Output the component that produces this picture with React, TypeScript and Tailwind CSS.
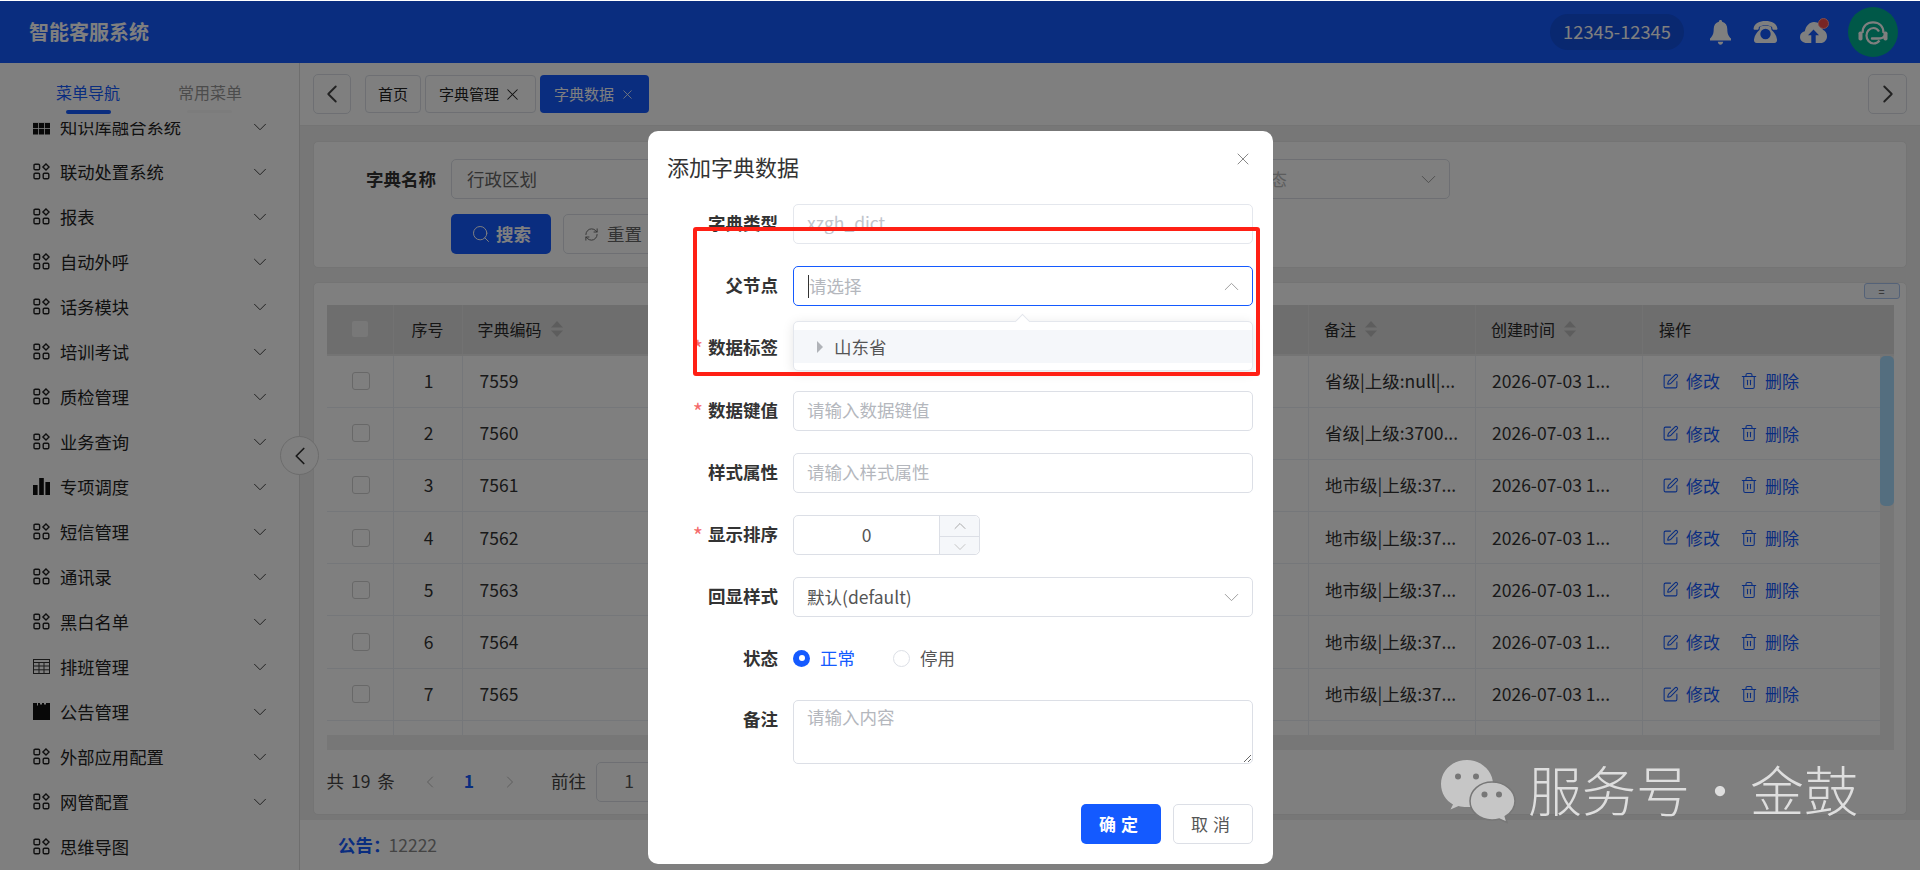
import React from "react";
import { ChevronDown, ChevronLeft, ChevronRight, ChevronUp, X, Search, RefreshCw, SquarePen, Trash2 } from "lucide-react";

const FONT = "font-['Noto_Sans_CJK_SC','Noto_Sans',sans-serif]";

function AppsIcon() {
  return (
    <svg viewBox="0 0 17 17" className="w-[17px] h-[17px] shrink-0" fill="none" stroke="#222" strokeWidth="1.4">
      <rect x="1" y="1.2" width="5.6" height="5.6" rx="1.2" />
      <rect x="1" y="10.2" width="5.6" height="5.6" rx="1.2" />
      <rect x="10.2" y="10.2" width="5.6" height="5.6" rx="1.2" />
      <path d="M13 .9l3.1 3.1L13 7.1 9.9 4z" />
    </svg>
  );
}
function GridIcon() {
  return (
    <svg viewBox="0 0 17 17" className="w-[17px] h-[17px] shrink-0" fill="#111">
      <rect x="0" y="0.5" width="17" height="3.6" />
      <rect x="0" y="5" width="5.2" height="5.2" />
      <rect x="6" y="5" width="5.2" height="5.2" />
      <rect x="12" y="5" width="5" height="5.2" />
      <rect x="0" y="11" width="5.2" height="5.5" />
      <rect x="6" y="11" width="5.2" height="5.5" />
      <rect x="12" y="11" width="5" height="5.5" />
    </svg>
  );
}
function BarsIcon() {
  return (
    <svg viewBox="0 0 17 17" className="w-[17px] h-[17px] shrink-0" fill="#111">
      <rect x="0" y="7" width="4.6" height="10" />
      <rect x="6.2" y="0" width="4.6" height="17" />
      <rect x="12.4" y="4" width="4.6" height="13" />
    </svg>
  );
}
function TableIcon() {
  return (
    <svg viewBox="0 0 17 17" className="w-[17px] h-[17px] shrink-0" fill="none" stroke="#333" strokeWidth="1">
      <rect x="0.5" y="1.5" width="16" height="14" />
      <path d="M0.5 4.5h16M0.5 8h16M0.5 11.8h16M6 4.5v11M11 4.5v11" />
    </svg>
  );
}
function NoticeIcon() {
  return (
    <svg viewBox="0 0 17 17" className="w-[17px] h-[17px] shrink-0" fill="#111">
      <path d="M0 0h4v2.4h1V0h2v1.4h2V0h2v1.4h2V0h4v17H0z" />
    </svg>
  );
}

const menu: [string, React.ReactNode, boolean][] = [
  ["知识库融合系统", <GridIcon />, true],
  ["联动处置系统", <AppsIcon />, true],
  ["报表", <AppsIcon />, true],
  ["自动外呼", <AppsIcon />, true],
  ["话务模块", <AppsIcon />, true],
  ["培训考试", <AppsIcon />, true],
  ["质检管理", <AppsIcon />, true],
  ["业务查询", <AppsIcon />, true],
  ["专项调度", <BarsIcon />, true],
  ["短信管理", <AppsIcon />, true],
  ["通讯录", <AppsIcon />, true],
  ["黑白名单", <AppsIcon />, true],
  ["排班管理", <TableIcon />, true],
  ["公告管理", <NoticeIcon />, true],
  ["外部应用配置", <AppsIcon />, true],
  ["网管配置", <AppsIcon />, true],
  ["思维导图", <AppsIcon />, false],
];

const rows = [
  ["1", "7559", "省级|上级:null|..."],
  ["2", "7560", "省级|上级:3700..."],
  ["3", "7561", "地市级|上级:37..."],
  ["4", "7562", "地市级|上级:37..."],
  ["5", "7563", "地市级|上级:37..."],
  ["6", "7564", "地市级|上级:37..."],
  ["7", "7565", "地市级|上级:37..."],
  ["", "", ""],
];

function SortIcon() {
  return (
    <svg viewBox="0 0 12 16" className="w-[12px] h-[16px] ml-[9px] shrink-0" fill="#bbbbbb">
      <path d="M6 0l6 6.5H0zM6 16L0 9.500h12z" />
    </svg>
  );
}

function Header() {
  return (
    <header className="h-[62px] shrink-0 bg-[#145aff] flex items-center pl-[29px] pr-[22px] text-white">
      <div className="text-[20px] font-bold">智能客服系统</div>
      <div className="ml-auto flex items-center">
        <div className="w-[134px] h-[36px] rounded-full bg-[#1250e0] flex items-center justify-center text-[18.300px]">12345-12345</div>
        <svg viewBox="0 0 21 25" className="w-[21px] h-[25px] ml-[26px]" fill="#fff">
          <path d="M10.500 0c1 0 1.600.7 1.600 1.700 3.400.8 5.200 3.600 5.200 7.300 0 5 1.300 7.300 3.700 9.600v1.900H0v-1.900C2.400 16.300 3.700 14 3.700 9c0-3.700 1.800-6.500 5.200-7.300C8.900.7 9.500 0 10.500 0z" />
          <path d="M7.800 21.800h5.400c-.3 1.700-1.400 3-2.700 3s-2.400-1.300-2.700-3z" />
        </svg>
        <svg viewBox="0 0 25 22" className="w-[25px] h-[22px] ml-[22px]" fill="#fff">
          <path d="M0.600 7.200C1.500 2.400 6.500 0 12.500 0s11 2.400 11.900 7.200c.2 1-.4 1.500-1.300 1.500h-2.300c-.9 0-1.400-.5-1.500-1.300l-.2-1.500C17.300 4.700 15 4.200 12.500 4.200s-4.800.5-6.600 1.700l-.2 1.500c-.1.800-.6 1.300-1.500 1.300H1.900C1 8.700.4 8.200.6 7.200z" />
          <path
            fillRule="evenodd"
            d="M7 5.800c1.500-.7 3.500-1 5.500-1s4 .3 5.500 1l.5 3.200c2.500 2 5 5.500 5.500 9.500.2 2-.8 3.500-2.800 3.500H3.800C1.800 22 .8 20.500 1 18.500 1.500 14.500 4 11 6.500 9zM12.500 7.800a5.200 5.200 0 100 10.400 5.200 5.200 0 000-10.400z"
          />
        </svg>
        <div className="relative w-[27px] h-[21px] ml-[22px]">
          <svg viewBox="0 0 27 21" className="w-[27px] h-[21px]">
            <path d="M7 21C3 21 0 18.500 0 15c0-3 2-5.200 4.800-5.700C5.800 4 9.500 0 14 0c4.600 0 8 3.300 8.800 7.800C25.300 8.700 27 11.200 27 14.200 27 18 24.300 21 20.500 21z" fill="#fff" />
            <path d="M13.500 7.500l5.500 5.800h-3.300V21h-4.400v-7.700H8z" fill="#145aff" />
          </svg>
          <span className="absolute -top-[4px] -right-[2px] w-[11px] h-[11px] rounded-full bg-[#f04b4b] border border-[#ff9a9a]" />
        </div>
        <div className="w-[50px] h-[50px] rounded-full bg-[#00b090] ml-[21px] flex items-center justify-center">
          <svg viewBox="0 0 30 24" className="w-[30px] h-[24px] mt-[1px]" fill="none" stroke="#fff">
            <path d="M4.500 12C4.500 5 9 1.300 15 1.300S25.500 5 25.500 12" strokeWidth="2.200" />
            <rect x="0.500" y="10.500" width="4" height="9" rx="1.800" fill="#fff" stroke="none" />
            <rect x="25.500" y="10.500" width="4" height="9" rx="1.800" fill="#fff" stroke="none" />
            <path d="M21 10.500C19.500 8 17.500 7 15.500 7 11.500 7 8.500 10.500 8.500 14.500s3 8 7 8c2.500 0 4.500-1 6-3" strokeWidth="2.200" />
            <path d="M14 17.500h6c3 0 5.500-.5 6.500-2.500" strokeWidth="2.400" strokeLinecap="round" />
          </svg>
        </div>
      </div>
    </header>
  );
}

function Sidebar() {
  return (
    <aside className="w-[300px] shrink-0 border-r border-[#dcdcdc] bg-white flex flex-col relative">
      <div className="h-[59px] shrink-0 flex text-[16px] relative z-10 bg-white">
        <div className="absolute left-[66px] top-[47px] w-[45px] h-[3.500px] rounded-full bg-[#145aff]" />
        <div className="absolute left-[187px] top-[47px] w-[45px] h-[3px] rounded-full bg-[#f8f8f8]" />
        <div className="w-[178px] pl-[56px] pt-[17px] text-[#145aff]">菜单导航</div>
        <div className="pt-[17px] text-[#999]">常用菜单</div>
      </div>
      <div className="flex-1 overflow-hidden">
        <div className="-mt-[18px]">
          {menu.map(([name, icon, arrow]) => (
            <div key={name} className="h-[45px] flex items-center pl-[33px] pr-[28px]">
              {icon}
              <span className="ml-[10px] text-[17.300px] text-[#222] leading-none">{name}</span>
              {arrow && <ChevronDown className="ml-auto w-[22px] h-[22px] text-[#333]" strokeWidth={1} />}
            </div>
          ))}
        </div>
      </div>
      <div className="absolute left-[280px] top-[373px] w-[39px] h-[39px] rounded-full bg-white border border-[#d8d8d8] z-10 flex items-center justify-center">
        <ChevronLeft className="w-[30px] h-[30px] text-[#333]" strokeWidth={1.400} />
      </div>
    </aside>
  );
}

function Tabs() {
  return (
    <div className="h-[63px] shrink-0 bg-white border-b border-[#e8e8e8] flex items-center px-[13px]">
      <div className="w-[38px] h-[40px] rounded-[5px] border border-[#dcdfe6] flex items-center justify-center">
        <ChevronLeft className="w-[30px] h-[30px] text-[#444]" strokeWidth={1.500} />
      </div>
      <div className="ml-[14px] h-[38px] w-[56px] rounded-[4px] border border-[#dcdfe6] flex items-center justify-center text-[15px] text-[#222]">首页</div>
      <div className="ml-[4px] h-[38px] w-[111px] rounded-[4px] border border-[#dcdfe6] flex items-center pl-[13px] text-[15px] text-[#222]">
        字典管理
        <X className="w-[19px] h-[19px] ml-[4px] text-[#222]" strokeWidth={1.300} />
      </div>
      <div className="ml-[4px] h-[38px] w-[109px] rounded-[4px] bg-[#145aff] flex items-center pl-[14px] text-[15px] text-white">
        字典数据
        <X className="w-[15px] h-[15px] ml-[6px] text-white" strokeWidth={1.300} />
      </div>
      <div className="ml-auto w-[39px] h-[40px] rounded-[5px] border border-[#dcdfe6] flex items-center justify-center">
        <ChevronRight className="w-[30px] h-[30px] text-[#444]" strokeWidth={1.500} />
      </div>
    </div>
  );
}

function SearchItem({ label, value, placeholder, select }: { label?: string; value?: string; placeholder?: string; select?: boolean }) {
  return (
    <div className="flex items-center">
      <div className="w-[105px] text-right text-[17.500px] font-bold text-[#333] mr-[15px]">{label}</div>
      <div className="w-[249px] h-[40px] rounded-[5px] border border-[#dcdfe6] flex items-center pl-[15px] pr-[8px] text-[17.500px]">
        <span className={value ? "text-[#666]" : "text-[#bbb]"}>{value ?? placeholder}</span>
        {select && <ChevronDown className="ml-auto w-[25px] h-[25px] text-[#999]" strokeWidth={0.900} />}
      </div>
    </div>
  );
}

function SearchCard() {
  return (
    <section className="h-[127px] shrink-0 bg-white rounded-[5px] border border-[#e8e8e8] pt-[17px] pl-[17px]">
      <div className="flex gap-[6px]">
        <SearchItem label="字典名称" value="行政区划" />
        <SearchItem />
        <SearchItem placeholder="数据状态" select />
      </div>
      <div className="flex ml-[120px] mt-[15px] gap-[12px] text-[17.500px]">
        <div className="w-[100px] h-[40px] rounded-[5px] bg-[#145aff] text-white font-bold flex items-center justify-center gap-[5px]">
          <Search className="w-[20px] h-[20px]" strokeWidth={1.200} />
          搜索
        </div>
        <div className="w-[100px] h-[40px] rounded-[5px] border border-[#dcdfe6] text-[#666] flex items-center justify-center gap-[8px]">
          <RefreshCw className="w-[15px] h-[15px]" strokeWidth={1.500} />
          重置
        </div>
      </div>
    </section>
  );
}

function DataTable() {
  return (
    <section className="h-[533px] shrink-0 mt-[14px] bg-white rounded-[5px] border border-[#e8e8e8] px-[12.500px] relative">
      <div className="h-[22px] flex justify-end -mr-[6px]">
        <div className="w-[36px] h-[16px] rounded-[3px] border border-[#a8c4f0] bg-[#f0f6ff] flex items-center justify-center text-[#555] text-[11px] leading-none">=</div>
      </div>
      <div className="h-[50.500px] bg-[#dcdcdc] flex items-stretch text-[16px] text-[#2a2a2a] border-b-2 border-[#e8e8e8]">
        <div className="w-[67px] border-r border-[#e4e4e4] flex items-center pl-[25px]">
          <span className="w-[16px] h-[16px] rounded-[2px] bg-[#f0f0f0]" />
        </div>
        <div className="w-[69px] border-r border-[#e4e4e4] flex items-center justify-center">序号</div>
        <div className="flex-1 border-r border-[#e4e4e4] flex items-center pl-[15px]">字典编码<SortIcon /></div>
        <div className="w-[167px] border-r border-[#e4e4e4] flex items-center pl-[15px]">备注<SortIcon /></div>
        <div className="w-[167px] border-r border-[#e4e4e4] flex items-center pl-[15px]">创建时间<SortIcon /></div>
        <div className="w-[250.500px] flex items-center pl-[16px]">操作</div>
      </div>
      <div className="flex h-[394px]">
        <div className="flex-1 flex flex-col min-w-0">
          <div className="h-[379.500px] overflow-hidden">
            {rows.map((r, i) => (
              <div key={i} className="h-[52.200px] flex items-stretch border-b border-[#ebeef5] text-[17.500px] text-[#333]">
                <div className="w-[67px] border-r border-[#ebeef5] flex items-center pl-[25px]">
                  {r[0] && <span className="w-[18px] h-[18px] rounded-[3px] border border-[#d0d0d0]" />}
                </div>
                <div className="w-[69px] border-r border-[#ebeef5] flex items-center justify-center pl-[2px]">{r[0]}</div>
                <div className="flex-1 border-r border-[#ebeef5] flex items-center pl-[17px]">{r[1]}</div>
                <div className="w-[167px] border-r border-[#ebeef5] flex items-center pl-[16px] whitespace-nowrap">{r[2]}</div>
                <div className="w-[167px] border-r border-[#ebeef5] flex items-center pl-[16px] whitespace-nowrap">{r[0] && "2026-07-03 1..."}</div>
                <div className="w-[236.500px] flex items-center pl-[19px] text-[#145aff] text-[17px]">
                  {r[0] && (
                    <>
                      <SquarePen className="w-[17px] h-[17px]" strokeWidth={1.500} />
                      <span className="ml-[7px]">修改</span>
                      <Trash2 className="w-[18px] h-[18px] ml-[20px]" strokeWidth={1.400} />
                      <span className="ml-[7px]">删除</span>
                    </>
                  )}
                </div>
              </div>
            ))}
          </div>
          <div className="h-[14.500px] bg-[#eeeeee]" />
        </div>
        <div className="w-[14px] bg-[#eeeeee]">
          <div className="h-[150px] rounded-[5px] bg-[#a9dcff] mt-[0.500px]" />
        </div>
      </div>
      <div className="h-[40px] mt-[12px] flex items-center text-[17.500px] text-[#444]">
        <span className="whitespace-pre [word-spacing:3px]">共 19 条</span>
        <ChevronLeft className="w-[20px] h-[20px] ml-[25px] text-[#bbb]" strokeWidth={1.200} />
        <span className="ml-[24px] font-bold text-[#145aff]">1</span>
        <ChevronRight className="w-[20px] h-[20px] ml-[26px] text-[#bbb]" strokeWidth={1.200} />
        <span className="ml-[31px]">前往</span>
        <div className="ml-[10px] w-[66px] h-[40px] rounded-[5px] border border-[#dcdfe6] flex items-center justify-center text-[#555]">1</div>
      </div>
    </section>
  );
}

function Main() {
  return (
    <main className="flex-1 min-w-0 flex flex-col bg-[#eeeeee]">
      <Tabs />
      <div className="flex-1 pt-[15px] px-[13px]">
        <SearchCard />
        <DataTable />
      </div>
      <div className="h-[50px] shrink-0 bg-white flex items-center pl-[38px] text-[17.500px]">
        <span className="font-bold text-[#145aff]">公告：</span>
        <span className="text-[#888] -ml-[2px]">12222</span>
      </div>
    </main>
  );
}

function Field({ label, required, shift, children }: { label: string; required?: boolean; shift?: boolean; children: React.ReactNode }) {
  return (
    <div className={shift ? "flex mb-[22.200px] -mt-[2px]" : "flex mb-[22.200px]"}>
      <div className="w-[130px] mr-[15px] h-[40px] leading-[38px] text-right text-[17.500px] font-bold text-[#333] shrink-0">
        {required && <span className="relative top-[3px] text-[#f56c6c] font-normal text-[22px] leading-none mr-[5px]">*</span>}
        {label}
      </div>
      <div className="flex-1 relative">{children}</div>
    </div>
  );
}

const inputCls =
  "w-full h-[40px] rounded-[5px] border border-[#dcdfe6] px-[13px] pb-[2px] text-[17.500px] text-[#555] outline-none placeholder:text-[#b4b7bd] bg-white";

function Dialog() {
  return (
    <div className="absolute left-[648px] top-[131px] w-[625px] h-[733px] rounded-[10px] bg-white z-50 pr-[20px]">
      <div className="h-[73px] pl-[19px] pt-[18px] text-[22px] leading-[34px] text-[#333] relative">
        添加字典数据
        <X className="absolute right-0 top-[18px] w-[20px] h-[20px] text-[#888]" strokeWidth={1.200} />
      </div>
      <Field label="字典类型">
        <input readOnly value="xzgh_dict" className={inputCls + " bg-[#f5f7fa] text-[#c0c4cc] border-[#e4e7ed] pb-[4px]"} />
      </Field>
      <Field label="父节点">
        <div className="w-full h-[40px] rounded-[5px] border border-[#145aff] flex items-center pl-[14px] pr-[8px] text-[17.500px] text-[#b4b7bd]">
          <span className="w-px h-[23px] bg-[#333]" />
          请选择
          <ChevronUp className="ml-auto w-[25px] h-[25px] text-[#999]" strokeWidth={0.900} />
        </div>
        <div className="absolute left-0 right-0 top-[55px] h-[50px] rounded-[5px] border border-[#e4e7ed] bg-white shadow-[0_2px_12px_rgba(0,0,0,0.1)] z-10 pt-[8px]">
          <div className="absolute left-[223px] -top-[6px] w-[11px] h-[11px] rotate-45 bg-white border-l border-t border-[#e4e7ed]" />
          <div className="h-[33px] bg-[#f5f7fa] flex items-center pl-[23px] text-[17.500px] text-[#555]">
            <span className="w-0 h-0 border-y-[6px] border-y-transparent border-l-[6px] border-l-[#b0b3b8]" />
            <span className="ml-[11px]">山东省</span>
          </div>
        </div>
      </Field>
      <Field label="数据标签" required>
        <input readOnly placeholder="请输入数据标签" className={inputCls} />
      </Field>
      <Field label="数据键值" required>
        <input readOnly placeholder="请输入数据键值" className={inputCls} />
      </Field>
      <Field label="样式属性">
        <input readOnly placeholder="请输入样式属性" className={inputCls} />
      </Field>
      <Field label="显示排序" required>
        <div className="w-[187px] h-[40px] rounded-[5px] border border-[#dcdfe6] flex text-[17.500px] text-[#555]">
          <div className="flex-1 flex items-center justify-center">0</div>
          <div className="w-[40px] border-l border-[#dcdfe6] bg-[#f5f7fa] rounded-r-[5px] flex flex-col text-[#999]">
            <div className="flex-1 border-b border-[#dcdfe6] flex items-center justify-center"><ChevronUp className="w-[20px] h-[20px]" strokeWidth={1} /></div>
            <div className="flex-1 flex items-center justify-center"><ChevronDown className="w-[20px] h-[20px] text-[#bbb]" strokeWidth={1} /></div>
          </div>
        </div>
      </Field>
      <Field label="回显样式">
        <div className="w-full h-[40px] rounded-[5px] border border-[#dcdfe6] flex items-center pl-[13px] pr-[8px] text-[17.500px] text-[#555]">
          默认(default)
          <ChevronDown className="ml-auto w-[25px] h-[25px] text-[#999]" strokeWidth={0.900} />
        </div>
      </Field>
      <Field label="状态">
        <div className="h-[40px] flex items-center text-[17.500px] -mt-[1px]">
          <span className="w-[17px] h-[17px] rounded-full bg-[#145aff] flex items-center justify-center">
            <span className="w-[6px] h-[6px] rounded-full bg-white" />
          </span>
          <span className="ml-[10px] text-[#145aff]">正常</span>
          <span className="ml-[38px] w-[17px] h-[17px] rounded-full border border-[#dcdfe6]" />
          <span className="ml-[10px] text-[#555]">停用</span>
        </div>
      </Field>
      <Field label="备注" shift>
        <textarea readOnly placeholder="请输入内容" className="block w-full h-[64px] rounded-[5px] border border-[#dcdfe6] px-[13px] py-[3px] text-[17.500px] outline-none placeholder:text-[#b4b7bd]" />
      </Field>
      <div className="flex justify-end gap-[12px] mt-[40px] text-[17px]">
        <div className="w-[80px] h-[40px] rounded-[5px] bg-[#145aff] text-white font-bold flex items-center justify-center tracking-[5px]">确定</div>
        <div className="w-[80px] h-[40px] rounded-[5px] border border-[#dcdfe6] text-[#555] flex items-center justify-center tracking-[5px]">取消</div>
      </div>
    </div>
  );
}

function Watermark() {
  return (
    <div className="absolute left-[1430px] top-[754px] z-[70] flex items-center h-[70px] text-[#dedede] font-light">
      <svg viewBox="0 0 100 70" className="w-[100px] h-[70px] shrink-0 mt-[2px]">
        <path d="M37 5C22 5 11 16 11 29c0 9 5 16.500 12 20.500l-2.500 5 8-3.500c2.500.7 5 1 8.500 1 14 0 26-10 26-23C63 16 51 5 37 5z" fill="#c6c6c6" />
        <circle cx="28" cy="21.500" r="3" fill="#777" />
        <circle cx="46" cy="21.500" r="3" fill="#777" />
        <path d="M62 27c-12.500 0-22 8.500-22 19s9.500 19 22 19c2.500 0 5-.3 7.300-1l7.700 3.500-1.700-6C81 58 85 52.500 85 46c0-10.500-10-19-23-19z" fill="#c6c6c6" stroke="#777" strokeWidth="1.500" />
        <circle cx="54.500" cy="39.500" r="3" fill="#777" />
        <circle cx="69" cy="39.500" r="3" fill="#777" />
      </svg>
      <span className="text-[54px] leading-none -ml-[2px]">服务号</span>
      <span className="text-[54px] leading-none w-[60px] text-center">·</span>
      <span className="text-[54px] leading-none">金鼓</span>
    </div>
  );
}

export default function App() {
  return (
    <div className={`${FONT} relative w-[1920px] h-[870px] overflow-hidden bg-white pt-px flex flex-col`}>
      <Header />
      <div className="flex-1 flex min-h-0">
        <Sidebar />
        <Main />
      </div>
      <div className="absolute inset-x-0 top-px bottom-0 bg-black/50 z-40" />
      <Dialog />
      <div className="absolute left-[693px] top-[227px] w-[567px] h-[149px] border-[4px] border-[#ff2015] rounded-[3px] z-[60]" />
      <Watermark />
    </div>
  );
}
